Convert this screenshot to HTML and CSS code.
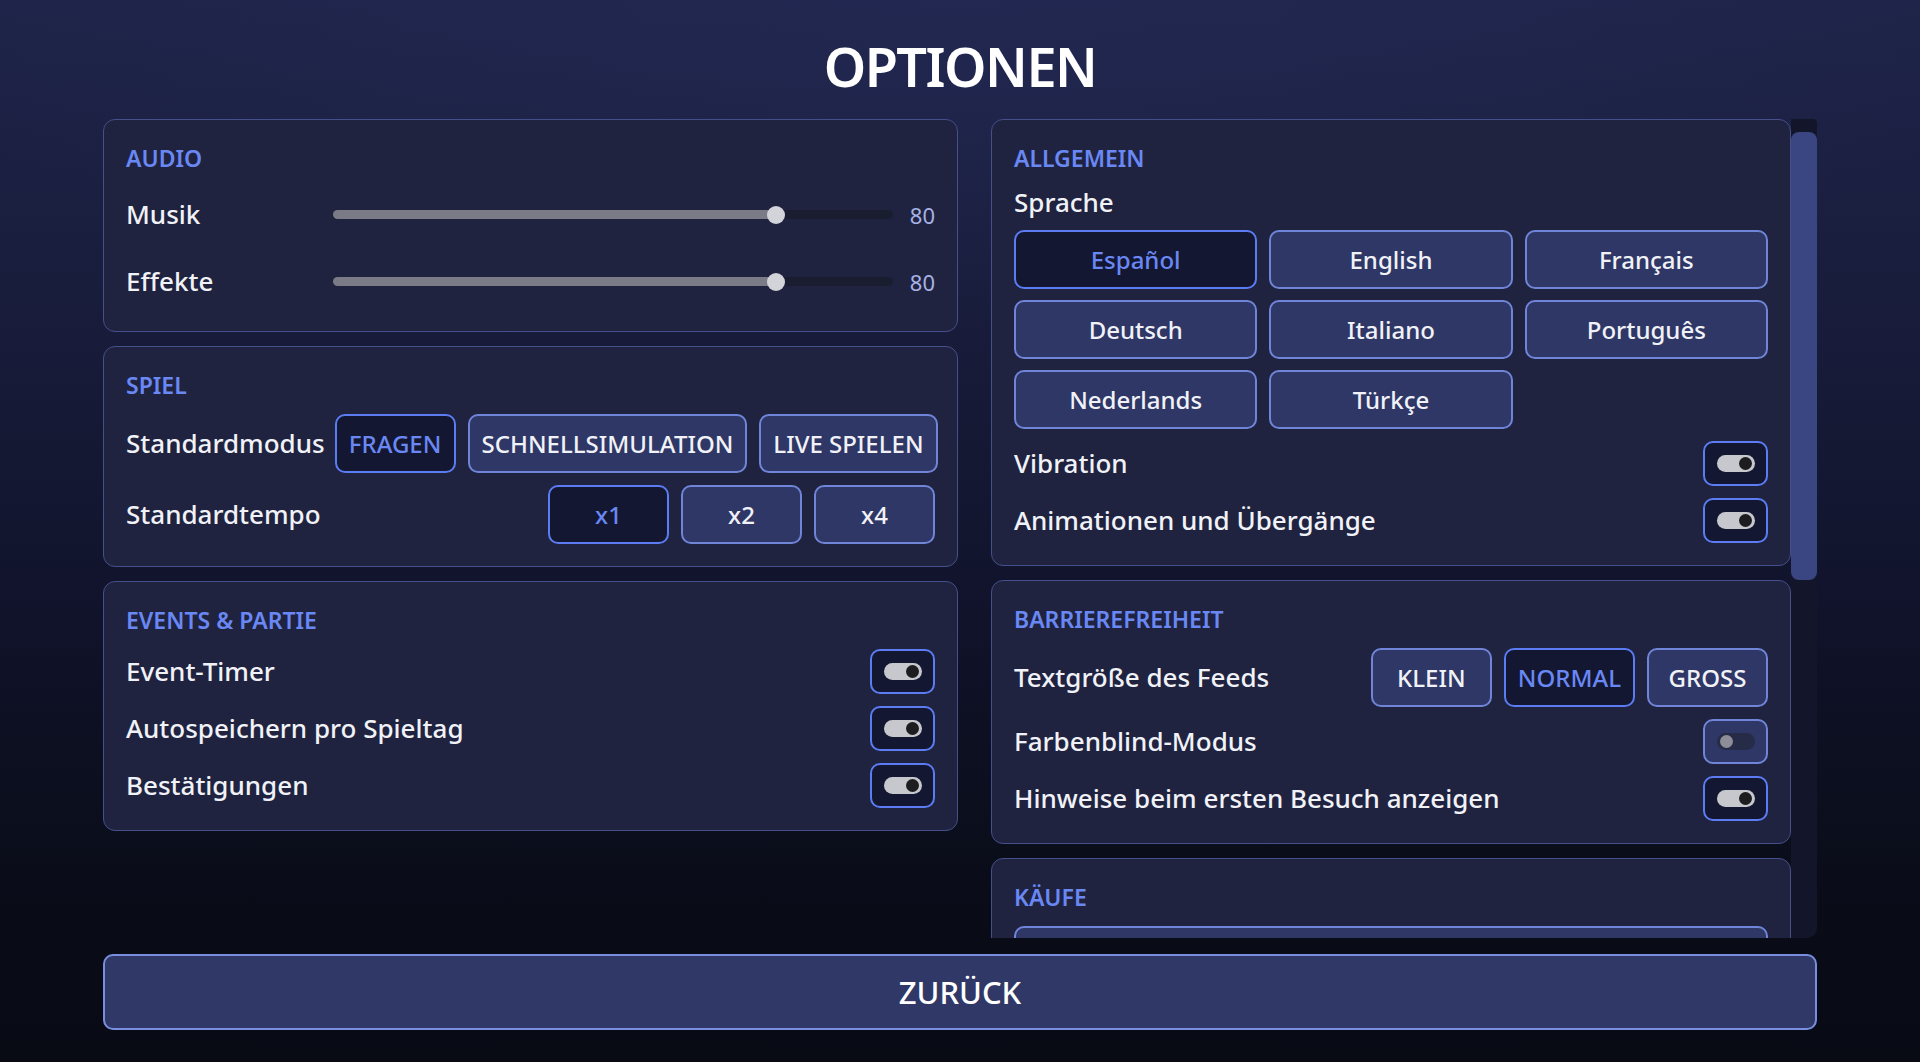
FILE: index.html
```html
<!DOCTYPE html>
<html lang="de">
<head>
  <meta charset="UTF-8">
  <meta name="viewport" content="width=device-width, initial-scale=1.0">
  <title>Optionen</title>
  <link rel="stylesheet" href="styles.css">
</head>
<body>
  <div class="screen">
    <h1 class="title">OPTIONEN</h1>

    <div class="columns">
      <!-- left column -->
      <div class="col">
        <section class="panel">
          <h2 class="panel-title">AUDIO</h2>
          <div class="slider-row">
            <span class="label">Musik</span>
            <div class="slider" style="--v: 0.8">
              <div class="slider-fill"></div>
              <span class="slider-thumb"></span>
            </div>
            <span class="slider-value">80</span>
          </div>
          <div class="slider-row">
            <span class="label">Effekte</span>
            <div class="slider" style="--v: 0.8">
              <div class="slider-fill"></div>
              <span class="slider-thumb"></span>
            </div>
            <span class="slider-value">80</span>
          </div>
        </section>

        <section class="panel">
          <h2 class="panel-title">SPIEL</h2>
          <div class="row">
            <span class="label">Standardmodus</span>
            <div class="btn-group">
              <button class="opt-btn active">FRAGEN</button>
              <button class="opt-btn">SCHNELLSIMULATION</button>
              <button class="opt-btn">LIVE SPIELEN</button>
            </div>
          </div>
          <div class="row">
            <span class="label">Standardtempo</span>
            <div class="btn-group">
              <button class="opt-btn active">x1</button>
              <button class="opt-btn">x2</button>
              <button class="opt-btn">x4</button>
            </div>
          </div>
        </section>

        <section class="panel">
          <h2 class="panel-title">EVENTS &amp; PARTIE</h2>
          <div class="row">
            <span class="label">Event-Timer</span>
            <span class="toggle on"><span class="switch"></span></span>
          </div>
          <div class="row">
            <span class="label">Autospeichern pro Spieltag</span>
            <span class="toggle on"><span class="switch"></span></span>
          </div>
          <div class="row">
            <span class="label">Bestätigungen</span>
            <span class="toggle on"><span class="switch"></span></span>
          </div>
        </section>
      </div>

      <!-- right column, scrolls -->
      <div class="scroll-wrap">
        <div class="col col-scroll">
          <section class="panel">
            <h2 class="panel-title">ALLGEMEIN</h2>
            <span class="label">Sprache</span>
            <div class="lang-grid">
              <button class="opt-btn active">Español</button>
              <button class="opt-btn">English</button>
              <button class="opt-btn">Français</button>
              <button class="opt-btn">Deutsch</button>
              <button class="opt-btn">Italiano</button>
              <button class="opt-btn">Português</button>
              <button class="opt-btn">Nederlands</button>
              <button class="opt-btn">Türkçe</button>
            </div>
            <div class="row">
              <span class="label">Vibration</span>
              <span class="toggle on"><span class="switch"></span></span>
            </div>
            <div class="row">
              <span class="label">Animationen und Übergänge</span>
              <span class="toggle on"><span class="switch"></span></span>
            </div>
          </section>

          <section class="panel">
            <h2 class="panel-title">BARRIEREFREIHEIT</h2>
            <div class="row">
              <span class="label">Textgröße des Feeds</span>
              <div class="btn-group">
                <button class="opt-btn">KLEIN</button>
                <button class="opt-btn active">NORMAL</button>
                <button class="opt-btn">GROSS</button>
              </div>
            </div>
            <div class="row">
              <span class="label">Farbenblind-Modus</span>
              <span class="toggle off"><span class="switch"></span></span>
            </div>
            <div class="row">
              <span class="label">Hinweise beim ersten Besuch anzeigen</span>
              <span class="toggle on"><span class="switch"></span></span>
            </div>
          </section>

          <section class="panel">
            <h2 class="panel-title">KÄUFE</h2>
            <button class="opt-btn wide">Werbung entfernen</button>
            <button class="opt-btn wide">Käufe wiederherstellen</button>
          </section>
        </div>
        <div class="scrollbar"><div class="scrollbar-thumb"></div></div>
      </div>
    </div>

    <button class="back-btn">ZURÜCK</button>
  </div>
</body>
</html>
```

FILE: styles.css
```css
html, body {
  height: 100%;
}
body {
  margin: 0;
  font-family: "Noto Sans", "Open Sans", sans-serif;
  color: #f1f2f7;
  background:
    radial-gradient(ellipse 60% 30% at 50% 0%, rgba(38, 46, 92, 0.45), transparent),
    linear-gradient(180deg, #1e2348 0%, #191d3c 28%, #10132a 58%, #0a0d19 82%, #080b14 100%);
  overflow: hidden;
}
.screen {
  height: 100%;
  box-sizing: border-box;
  padding: 28px 103px 32px;
  display: flex;
  flex-direction: column;
}
.title {
  margin: 0 0 15px;
  text-align: center;
  font-size: 54px;
  font-weight: 600;
  letter-spacing: -1.5px;
  line-height: 76px;
  color: #ffffff;
}
.columns {
  flex: 1;
  min-height: 0;
  display: grid;
  grid-template-columns: 855px 1fr;
  column-gap: 33px;
  margin-bottom: 16px;
}
.col {
  display: flex;
  flex-direction: column;
  gap: 14px;
  min-height: 0;
}
.scroll-wrap {
  display: flex;
  min-height: 0;
}
.col-scroll {
  flex: 1;
  overflow: hidden;
}
.scrollbar {
  width: 26px;
  flex-shrink: 0;
  box-sizing: border-box;
  padding-top: 13px;
  background: #13162b;
  border-radius: 0 4px 10px 0;
}
.scrollbar-thumb {
  height: 448px;
  border-radius: 8px;
  background: #3a4682;
}
.panel {
  flex-shrink: 0;
  background: #1f2340;
  border: 1px solid #454f8a;
  border-radius: 12px;
  padding: 22px;
  display: flex;
  flex-direction: column;
  gap: 12px;
}
.panel-title {
  margin: 0;
  font-size: 23px;
  font-weight: 600;
  line-height: 33px;
  color: #6a88f4;
}
.label {
  font-size: 26px;
  font-weight: 500;
  line-height: 31px;
  white-space: nowrap;
}
.row {
  display: flex;
  align-items: center;
  justify-content: space-between;
  gap: 10px;
  min-height: 44px;
}
.slider-row {
  display: grid;
  grid-template-columns: 195px 1fr 30px;
  column-gap: 12px;
  align-items: center;
  min-height: 55px;
}
.slider {
  position: relative;
  height: 9px;
  border-radius: 5px;
  background: #1a1d30;
}
.slider-fill {
  width: calc(9px + (100% - 18px) * var(--v));
  height: 100%;
  border-radius: 5px;
  background: #7a7b87;
}
.slider-thumb {
  position: absolute;
  top: 50%;
  left: calc(9px + (100% - 18px) * var(--v));
  width: 18px;
  height: 18px;
  border-radius: 50%;
  background: #d3d4da;
  transform: translate(-50%, -50%);
}
.slider-value {
  font-size: 22px;
  color: #a7b2e4;
  text-align: right;
}
.btn-group {
  display: flex;
  gap: 12px;
  flex-shrink: 0;
}
.opt-btn {
  font-family: inherit;
  font-size: 24px;
  font-weight: 500;
  line-height: 31px;
  white-space: nowrap;
  color: #f1f2f7;
  background: #2e3766;
  border: 2px solid #7085d8;
  border-radius: 10px;
  padding: 12px 12px;
  min-width: 121px;
  cursor: pointer;
}
.opt-btn.active {
  background: #131732;
  color: #6a88f4;
  border-color: #5b7cf2;
}
.opt-btn.wide {
  width: 100%;
}
.lang-grid {
  display: grid;
  grid-template-columns: repeat(3, 1fr);
  gap: 11px 12px;
}
.toggle {
  width: 65px;
  height: 45px;
  box-sizing: border-box;
  border: 2px solid #5b7cf2;
  border-radius: 10px;
  background: #131732;
  display: flex;
  align-items: center;
  justify-content: center;
  flex-shrink: 0;
}
.switch {
  position: relative;
  width: 38px;
  height: 17px;
  border-radius: 9px;
  background: #c7c8cd;
}
.switch::after {
  content: "";
  position: absolute;
  top: 2px;
  right: 3px;
  width: 13px;
  height: 13px;
  border-radius: 50%;
  background: #1d1d20;
}
.toggle.off {
  background: #2e3766;
  border-color: #7085d8;
}
.toggle.off .switch {
  background: #262b47;
}
.toggle.off .switch::after {
  right: auto;
  left: 3px;
  background: #8d8e97;
}
.back-btn {
  flex-shrink: 0;
  height: 76px;
  font-family: inherit;
  font-size: 31px;
  font-weight: 500;
  color: #ffffff;
  background: #2f3867;
  border: 2px solid #7a8ee0;
  border-radius: 10px;
  cursor: pointer;
}
```
